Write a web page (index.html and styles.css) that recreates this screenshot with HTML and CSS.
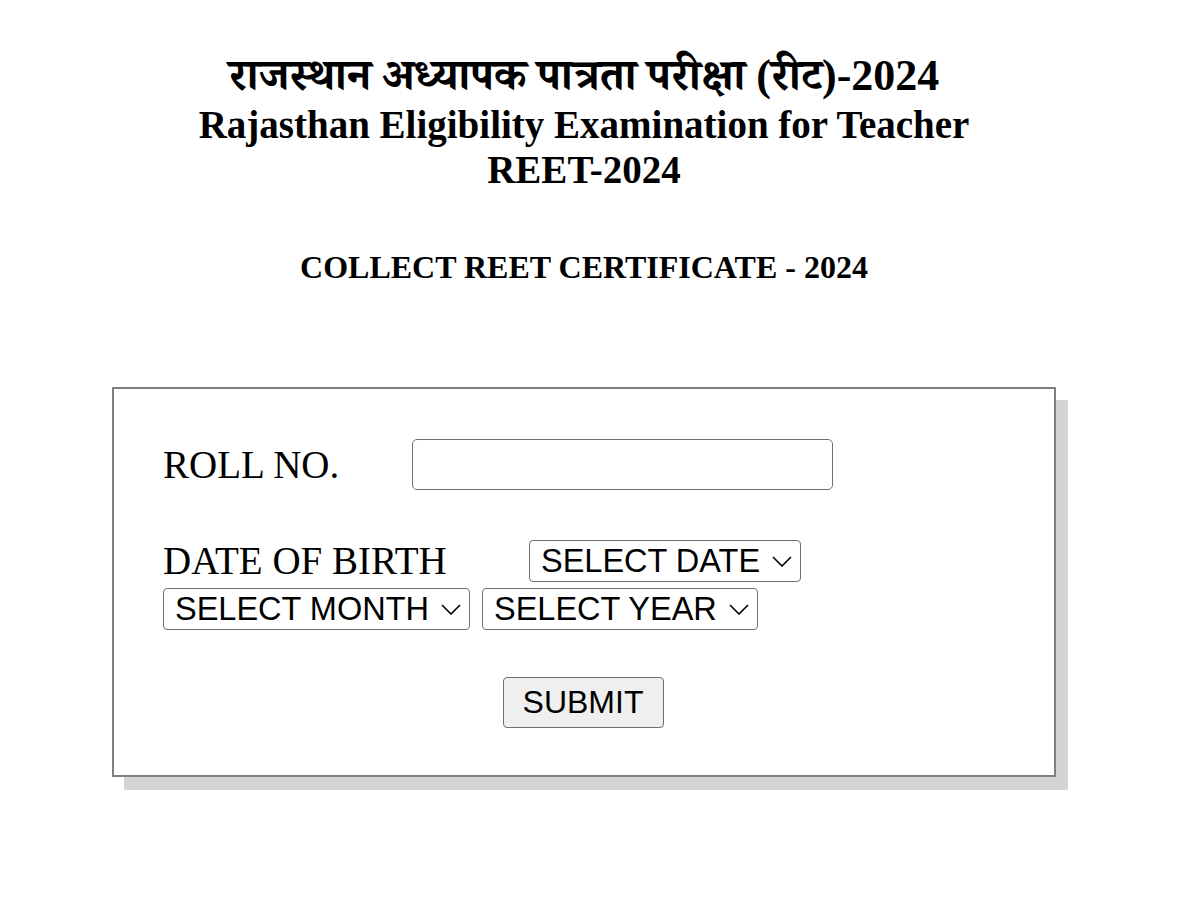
FILE: index.html
```html
<!DOCTYPE html>
<html lang="hi">
<head>
<meta charset="utf-8">
<title>REET-2024</title>
<link rel="stylesheet" href="styles.css">
</head>
<body>
<div class="page">
  <header class="titles">
    <h1 class="t-hi">राजस्थान अध्यापक पात्रता परीक्षा (रीट)-2024</h1>
    <h2 class="t-en">Rajasthan Eligibility Examination for Teacher</h2>
    <h2 class="t-en">REET-2024</h2>
  </header>
  <h3 class="subtitle">COLLECT REET CERTIFICATE - 2024</h3>
  <form class="card">
    <div class="row-roll">
      <label class="lbl lbl-roll" for="roll">ROLL NO.</label>
      <input class="txt" id="roll" type="text">
    </div>
    <div class="dob">
      <div class="dob-line">
        <span class="lbl lbl-dob">DATE OF BIRTH</span>
        <span class="sel-wrap sel-date">
          <select class="sel"><option>SELECT DATE</option></select>
          <svg class="chev" width="20" height="11" viewBox="0 0 20 11"><path d="M1 1 L10 10 L19 1" fill="none" stroke="#000" stroke-width="1.6"/></svg>
        </span>
      </div>
      <div class="dob-line">
        <span class="sel-wrap sel-month">
          <select class="sel"><option>SELECT MONTH</option></select>
          <svg class="chev" width="20" height="11" viewBox="0 0 20 11"><path d="M1 1 L10 10 L19 1" fill="none" stroke="#000" stroke-width="1.6"/></svg>
        </span>
        <span class="sel-wrap sel-year">
          <select class="sel"><option>SELECT YEAR</option></select>
          <svg class="chev" width="20" height="11" viewBox="0 0 20 11"><path d="M1 1 L10 10 L19 1" fill="none" stroke="#000" stroke-width="1.6"/></svg>
        </span>
      </div>
    </div>
    <div class="actions">
      <button type="button" class="btn">SUBMIT</button>
    </div>
  </form>
</div>
</body>
</html>
```
FILE: styles.css
```css
html, body {
  margin: 0;
  padding: 0;
  background: #ffffff;
}
body {
  font-family: "Liberation Serif", "Noto Serif Devanagari", "Noto Sans Devanagari", "FreeSerif", serif;
  color: #000;
}
.page {
  width: 1168px;
  padding-top: 50px;
  padding-bottom: 110px;
}
.titles {
  text-align: center;
}
.t-hi {
  margin: 0;
  font-size: 44px;
  line-height: 52px;
  font-weight: bold;
}
.t-en {
  margin: 0;
  font-size: 39px;
  line-height: 46px;
  font-weight: bold;
}
.t-en + .t-en {
  margin-top: -1px;
}
.subtitle {
  margin: 56px 0 0;
  text-align: center;
  font-size: 32px;
  line-height: 36px;
  font-weight: bold;
}
.card {
  margin: 102px 0 0 112px;
  width: 944px;
  height: 390px;
  border: 2px solid #808080;
  box-shadow: 12px 13px 0 #d4d4d4;
  padding: 0 0 0 49px;
  box-sizing: border-box;
  display: flex;
  flex-direction: column;
}
.lbl {
  font-size: 39px;
  line-height: 44px;
}
.row-roll {
  display: flex;
  align-items: center;
  margin-top: 50px;
}
.lbl-roll {
  width: 249px;
}
.txt {
  width: 421px;
  height: 51px;
  box-sizing: border-box;
  border: 1px solid #707070;
  border-radius: 5px;
  font-size: 28px;
  margin: 0;
}
.dob {
  margin-top: 49px;
  display: flex;
  flex-direction: column;
  gap: 5px;
}
.dob-line {
  display: flex;
  align-items: center;
  gap: 12px;
}
.lbl-dob {
  width: 354px;
}
.sel-wrap {
  position: relative;
  display: block;
  height: 42px;
}
.sel {
  appearance: none;
  -webkit-appearance: none;
  display: block;
  height: 42px;
  box-sizing: border-box;
  margin: 0;
  padding: 0 0 0 11px;
  font-family: "Liberation Sans", Arial, sans-serif;
  font-size: 32.5px;
  color: #000;
  background: #fff;
  border: 1px solid #707070;
  border-radius: 4px;
}
.sel-date .sel { width: 272px; }
.sel-month .sel { width: 307px; }
.sel-year .sel { width: 276px; }
.chev {
  position: absolute;
  right: 9px;
  top: 16px;
  pointer-events: none;
}
.actions {
  display: flex;
  justify-content: center;
  margin-top: 47px;
  padding-right: 51px;
}
.btn {
  width: 161px;
  height: 51px;
  margin: 0;
  padding: 0;
  font-family: "Liberation Sans", Arial, sans-serif;
  font-size: 32px;
  color: #000;
  background: #efefef;
  border: 1px solid #707070;
  border-radius: 4px;
}
```
